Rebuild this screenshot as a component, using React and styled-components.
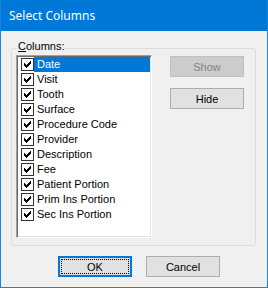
import React, { useState } from 'react';
import styled, { createGlobalStyle } from 'styled-components';

const GlobalStyle = createGlobalStyle`
  body {
    margin: 0;
    background: #f0f0f0;
  }
`;

const Window = styled.div`
  width: 268px;
  height: 288px;
  box-sizing: border-box;
  border: 1px solid #1883d7;
  border-top: none;
  background: #f0f0f0;
  display: flex;
  flex-direction: column;
  font-family: 'Liberation Sans', Arial, sans-serif;
  font-size: 11px;
  color: #000;
`;

const TitleBar = styled.div`
  height: 31px;
  flex-shrink: 0;
  background: #0078d7;
  color: #fff;
  display: flex;
  align-items: center;
  padding-left: 8px;
  font-family: 'Noto Sans', 'Open Sans', sans-serif;
  font-size: 12px;
`;

const Body = styled.div`
  padding: 17px 11px 0 10px;
  display: flex;
  flex-direction: column;
`;

const GroupBox = styled.div`
  position: relative;
  height: 198px;
  box-sizing: border-box;
  border: 1px solid #dcdcdc;
  border-radius: 3px;
  padding: 6px 0 0 4px;
  display: flex;
  align-items: flex-start;
  gap: 18px;
`;

const GroupLabel = styled.span`
  position: absolute;
  top: -9px;
  left: 5px;
  padding: 0 1px;
  line-height: 13px;
  background: #f0f0f0;
`;

const ListBox = styled.div`
  width: 136px;
  height: 183px;
  box-sizing: border-box;
  background: #fff;
  border-top: 1px solid #a0a0a0;
  border-left: 1px solid #a0a0a0;
  border-right: 1px solid #fff;
  border-bottom: 1px solid #fff;
  box-shadow: inset 1px 1px 0 #696969, inset -1px -1px 0 #e3e3e3;
  padding: 1px 1px 0 1px;
  display: flex;
  flex-direction: column;
`;

const Row = styled.div`
  height: 15px;
  display: flex;
  align-items: center;
`;

const CheckBox = styled.span`
  width: 13px;
  height: 13px;
  box-sizing: border-box;
  margin-left: 3px;
  border: 1px solid #333;
  background: #fff;
  display: flex;
  flex-shrink: 0;
`;

const ItemLabel = styled.span`
  flex: 1;
  height: 15px;
  line-height: 15px;
  padding-left: 3px;
  white-space: nowrap;
  background: ${p => (p.$selected ? '#0078d7' : 'transparent')};
  color: ${p => (p.$selected ? '#fff' : '#000')};
`;

const ButtonColumn = styled.div`
  margin-top: 1px;
  display: flex;
  flex-direction: column;
  gap: 11px;
`;

const Button = styled.button`
  width: 74px;
  height: 21px;
  box-sizing: border-box;
  padding: 0;
  font-family: 'Liberation Sans', Arial, sans-serif;
  font-size: 11px;
  border: 1px solid #adadad;
  background: #e1e1e1;
  color: #000;

  &:disabled {
    border-color: #bfbfbf;
    background: #cccccc;
    color: #838383;
  }
`;

const DefaultButton = styled(Button)`
  border: 2px solid #0078d7;
  outline: 1px dotted #000;
  outline-offset: -4px;
`;

const Footer = styled.div`
  margin-top: 10px;
  padding-left: 47px;
  display: flex;
  gap: 14px;
`;

// classic 7x7 check glyph, one 3px-tall column per x
const checkColumns = [4, 5, 6, 5, 4, 3, 2];

const Check = () => (
  <svg width="11" height="11" viewBox="0 0 11 11" shapeRendering="crispEdges">
    {checkColumns.map((y, i) => (
      <rect key={i} x={2 + i} y={y} width="1" height="3" fill="#000" />
    ))}
  </svg>
);

const columns = [
  'Date',
  'Visit',
  'Tooth',
  'Surface',
  'Procedure Code',
  'Provider',
  'Description',
  'Fee',
  'Patient Portion',
  'Prim Ins Portion',
  'Sec Ins Portion'
];

const App = () => {
  const [selected] = useState(0);

  return (
    <Window>
      <GlobalStyle />
      <TitleBar>Select Columns</TitleBar>
      <Body>
        <GroupBox>
          <GroupLabel>
            <u>C</u>olumns:
          </GroupLabel>
          <ListBox>
            {columns.map((name, i) => (
              <Row key={name}>
                <CheckBox>
                  <Check />
                </CheckBox>
                <ItemLabel $selected={i === selected}>{name}</ItemLabel>
              </Row>
            ))}
          </ListBox>
          <ButtonColumn>
            <Button disabled>Show</Button>
            <Button>Hide</Button>
          </ButtonColumn>
        </GroupBox>
        <Footer>
          <DefaultButton>OK</DefaultButton>
          <Button>Cancel</Button>
        </Footer>
      </Body>
    </Window>
  );
};

export default App;
